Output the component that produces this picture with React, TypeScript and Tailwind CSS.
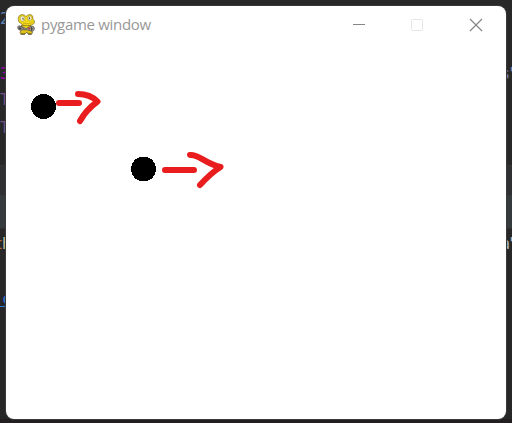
type Fragment = { text: string; className: string };

// Pieces of editor code that peek out at either side of the window.
const fragments: Fragment[] = [
  { text: "2", className: "left-0 top-[10px] text-[#6182b5]" },
  { text: "3", className: "left-0 top-[65px] text-[#a800b0]" },
  { text: "T", className: "left-0 top-[91px] text-[#765083]" },
  { text: "T", className: "left-0 top-[119px] text-[#765083]" },
  { text: "t", className: "left-[-6px] top-[235px] text-[#b06a32]" },
  { text: "h", className: "left-[2px] top-[235px] text-[#c4c1a2]" },
  { text: "c", className: "left-[2px] top-[290px] text-[#287bde]" },
  { text: "s'", className: "left-[501px] top-[65px] tracking-[-3px] text-[#7480b8]" },
  { text: "a'", className: "left-[501px] top-[235px] tracking-[-3px] text-[#a9b7c6]" },
];

function Editor() {
  return (
    <div className="absolute inset-0 flex flex-col overflow-hidden bg-[#272727] font-['DejaVu_Sans_Mono',monospace] text-[15px] leading-[18px]">
      <div className="h-[165px] bg-[#282828]" />
      <div className="h-[30px] border-t border-[#353535] bg-[#2e3032]" />
      <div className="h-[33px] bg-[#353b3d]" />
      <div className="h-[191px] border-t border-[#303030]" />
      <div className="flex-1 bg-[#231f20]" />
      {fragments.map((item, index) => (
        <span key={index} className={`absolute whitespace-pre ${item.className}`}>
          {item.text}
        </span>
      ))}
      <div className="absolute left-0 top-[306px] h-px w-[6px] bg-[#287bde]" />
    </div>
  );
}

function PygameIcon() {
  return (
    <svg className="h-[21px] w-[18px]" viewBox="0 0 18 21">
      <path d="M4.500 11h9l1 4 1 4-1 1H11l-1-2-2 2H4l-1-1.500L4.500 15z" fill="#dfc11b" stroke="#51480f" strokeWidth=".6" />
      <path d="M2.500 1.500Q5-.3 7.500 1.200L9 2.600 10.500 1.200Q13-.3 15 1.300Q16.600 3 15.800 5Q18.200 6.700 17.300 9Q15.800 11.800 10 11.800Q5.500 11.800 4 9.500Q1.300 8.600 1.200 5.500Q1.200 2.700 2.500 1.500z" fill="#f0d71c" stroke="#6c600f" strokeWidth=".6" />
      <ellipse cx="5.500" cy="4.600" rx="2.300" ry="2.700" fill="#f1efd6" stroke="#8c7a12" strokeWidth=".4" />
      <ellipse cx="12.800" cy="4.200" rx="2" ry="2.300" fill="#f1efd6" stroke="#8c7a12" strokeWidth=".4" />
      <path d="M6 3.800v1.900M12.400 3.300v1.900" stroke="#292917" strokeWidth=".9" />
      <path d="M6 9.200Q11 10.600 15.800 8.600" fill="none" stroke="#b4981a" strokeWidth=".6" />
      <path d="M.7 12.600Q2.300 10.800 4.500 12.500L9 14.500 13.500 12.500Q17.500 11.500 17.400 14.600Q17.200 18 14 17L11 16 6 15.700Q2.600 17 1 15Z" fill="#96928f" stroke="#4b4744" strokeWidth=".6" />
      <path d="M1.500 14.200h3M3 12.700v3M14.500 13v3.800" stroke="#343434" strokeWidth=".8" />
      <path d="M5 12.500l2 3M16.500 13.500l-2 3" stroke="#66605b" strokeWidth=".8" />
      <circle cx="12.200" cy="14.500" r="1" fill="#bd3930" />
      <path d="M6.500 12l2.500 2 2.500-2" fill="#eed51e" />
      <path d="M3.500 20.200H8M11 20.200h3.800" stroke="#272510" strokeWidth=".7" />
    </svg>
  );
}

function TitleBar() {
  return (
    <header className="flex h-[36px] items-center">
      <div className="ml-[11px]">
        <PygameIcon />
      </div>
      <h1 className="ml-[6px] flex-1 whitespace-nowrap font-['Open_Sans','Noto_Sans',sans-serif] text-[15px] font-normal leading-5 tracking-[-0.3px] text-[#989898]">
        pygame window
      </h1>
      <div className="flex h-full w-[176px] text-[#858585]">
        <svg className="h-[38px] w-[58px]" viewBox="0 0 58 38">
          <path d="M23 18.5h12" stroke="currentColor" />
        </svg>
        <svg className="h-[38px] w-[59px]" viewBox="0 0 59 38">
          <rect x="23.5" y="13.5" width="11" height="11" rx="1" fill="none" stroke="#e5e5e5" />
        </svg>
        <svg className="h-[38px] w-[59px]" viewBox="0 0 59 38">
          <path d="M23 13l12 12M35 13L23 25" stroke="currentColor" strokeWidth="1.2" />
        </svg>
      </div>
    </header>
  );
}

function Canvas() {
  return (
    <svg className="mt-[2px] h-[375px] w-[500px]" viewBox="0 0 500 375">
      <g shapeRendering="crispEdges">
        <circle cx="37.5" cy="62.5" r="12.5" />
        <circle cx="137.5" cy="125" r="12.5" />
      </g>
      <g fill="none" stroke="#e91d1d" strokeWidth="6" strokeLinecap="round" strokeLinejoin="round">
        <path d="M53 59H73M72 50Q84 50 91.5 57.5Q80 66 74 77" />
        <path d="M159 126H188M184 111C193 110 198 119 214.500 123Q205 129 194 141" />
      </g>
    </svg>
  );
}

export default function App() {
  return (
    <main className="relative h-[423px] w-[512px] overflow-hidden bg-[#272727]">
      <Editor />
      <section className="absolute left-[6px] top-[6px] flex h-[413px] w-[500px] flex-col overflow-hidden rounded-[8px] bg-white shadow-[0_0_0_1px_#393939]">
        <TitleBar />
        <Canvas />
      </section>
    </main>
  );
}
